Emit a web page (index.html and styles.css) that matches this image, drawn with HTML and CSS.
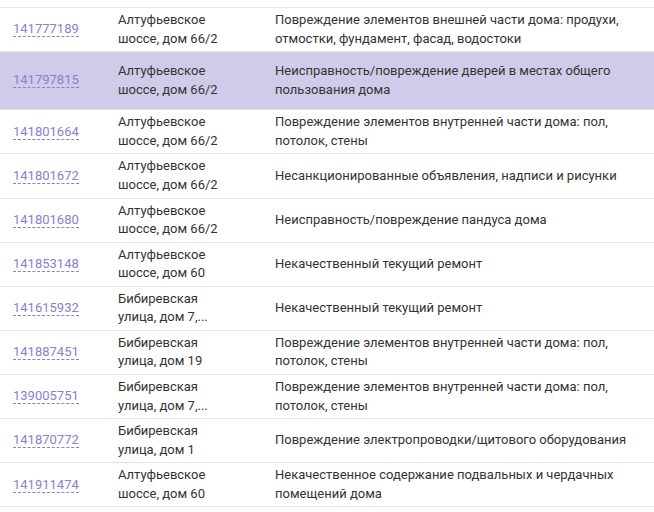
FILE: index.html
```html
<!DOCTYPE html>
<html lang="ru">
<head>
<meta charset="utf-8">
<link rel="stylesheet" href="styles.css">
</head>
<body>
<div class="list">
  <div class="row"><div class="id"><a>141777189</a></div><div class="addr">Алтуфьевское шоссе, дом 66/2</div><div class="desc">Повреждение элементов внешней части дома: продухи, отмостки, фундамент, фасад, водостоки</div></div>
  <div class="row active"><div class="id"><a>141797815</a></div><div class="addr">Алтуфьевское шоссе, дом 66/2</div><div class="desc">Неисправность/повреждение дверей в местах общего пользования дома</div></div>
  <div class="row"><div class="id"><a>141801664</a></div><div class="addr">Алтуфьевское шоссе, дом 66/2</div><div class="desc">Повреждение элементов внутренней части дома: пол, потолок, стены</div></div>
  <div class="row"><div class="id"><a>141801672</a></div><div class="addr">Алтуфьевское шоссе, дом 66/2</div><div class="desc">Несанкционированные объявления, надписи и рисунки</div></div>
  <div class="row"><div class="id"><a>141801680</a></div><div class="addr">Алтуфьевское шоссе, дом 66/2</div><div class="desc">Неисправность/повреждение пандуса дома</div></div>
  <div class="row"><div class="id"><a>141853148</a></div><div class="addr">Алтуфьевское шоссе, дом 60</div><div class="desc">Некачественный текущий ремонт</div></div>
  <div class="row"><div class="id"><a>141615932</a></div><div class="addr">Бибиревская улица, дом 7,...</div><div class="desc">Некачественный текущий ремонт</div></div>
  <div class="row"><div class="id"><a>141887451</a></div><div class="addr">Бибиревская улица, дом 19</div><div class="desc">Повреждение элементов внутренней части дома: пол, потолок, стены</div></div>
  <div class="row"><div class="id"><a>139005751</a></div><div class="addr">Бибиревская улица, дом 7,...</div><div class="desc">Повреждение элементов внутренней части дома: пол, потолок, стены</div></div>
  <div class="row"><div class="id"><a>141870772</a></div><div class="addr">Бибиревская улица, дом 1</div><div class="desc">Повреждение электропроводки/щитового оборудования</div></div>
  <div class="row"><div class="id"><a>141911474</a></div><div class="addr">Алтуфьевское шоссе, дом 60</div><div class="desc">Некачественное содержание подвальных и чердачных помещений дома</div></div>
</div>
</body>
</html>
```

FILE: styles.css
```css
html, body {
  margin: 0;
  padding: 0;
  background: #ffffff;
}
body {
  padding-top: 7px;
  font-family: Roboto, "Liberation Sans", Arial, sans-serif;
  font-size: 13px;
  line-height: 18.57px;
  color: #333333;
}
.list {
  border-top: 1px solid #e4e4e4;
}
.row {
  display: grid;
  grid-template-columns: 105px 157px 1fr;
  align-items: center;
  padding: 3px 14px 3px 13px;
  border-bottom: 1px solid #e4e4e4;
  min-height: 37.14px;
}
.row.active {
  background: #d1cbea;
  padding-top: 10px;
  padding-bottom: 10px;
}
.id a {
  color: #8a80cf;
  text-decoration: none;
  border-bottom: 1px dashed #8a80cf;
  font-size: 13px;
}
.addr {
  padding-right: 37px;
}
.desc {
  padding-right: 0;
}
```
